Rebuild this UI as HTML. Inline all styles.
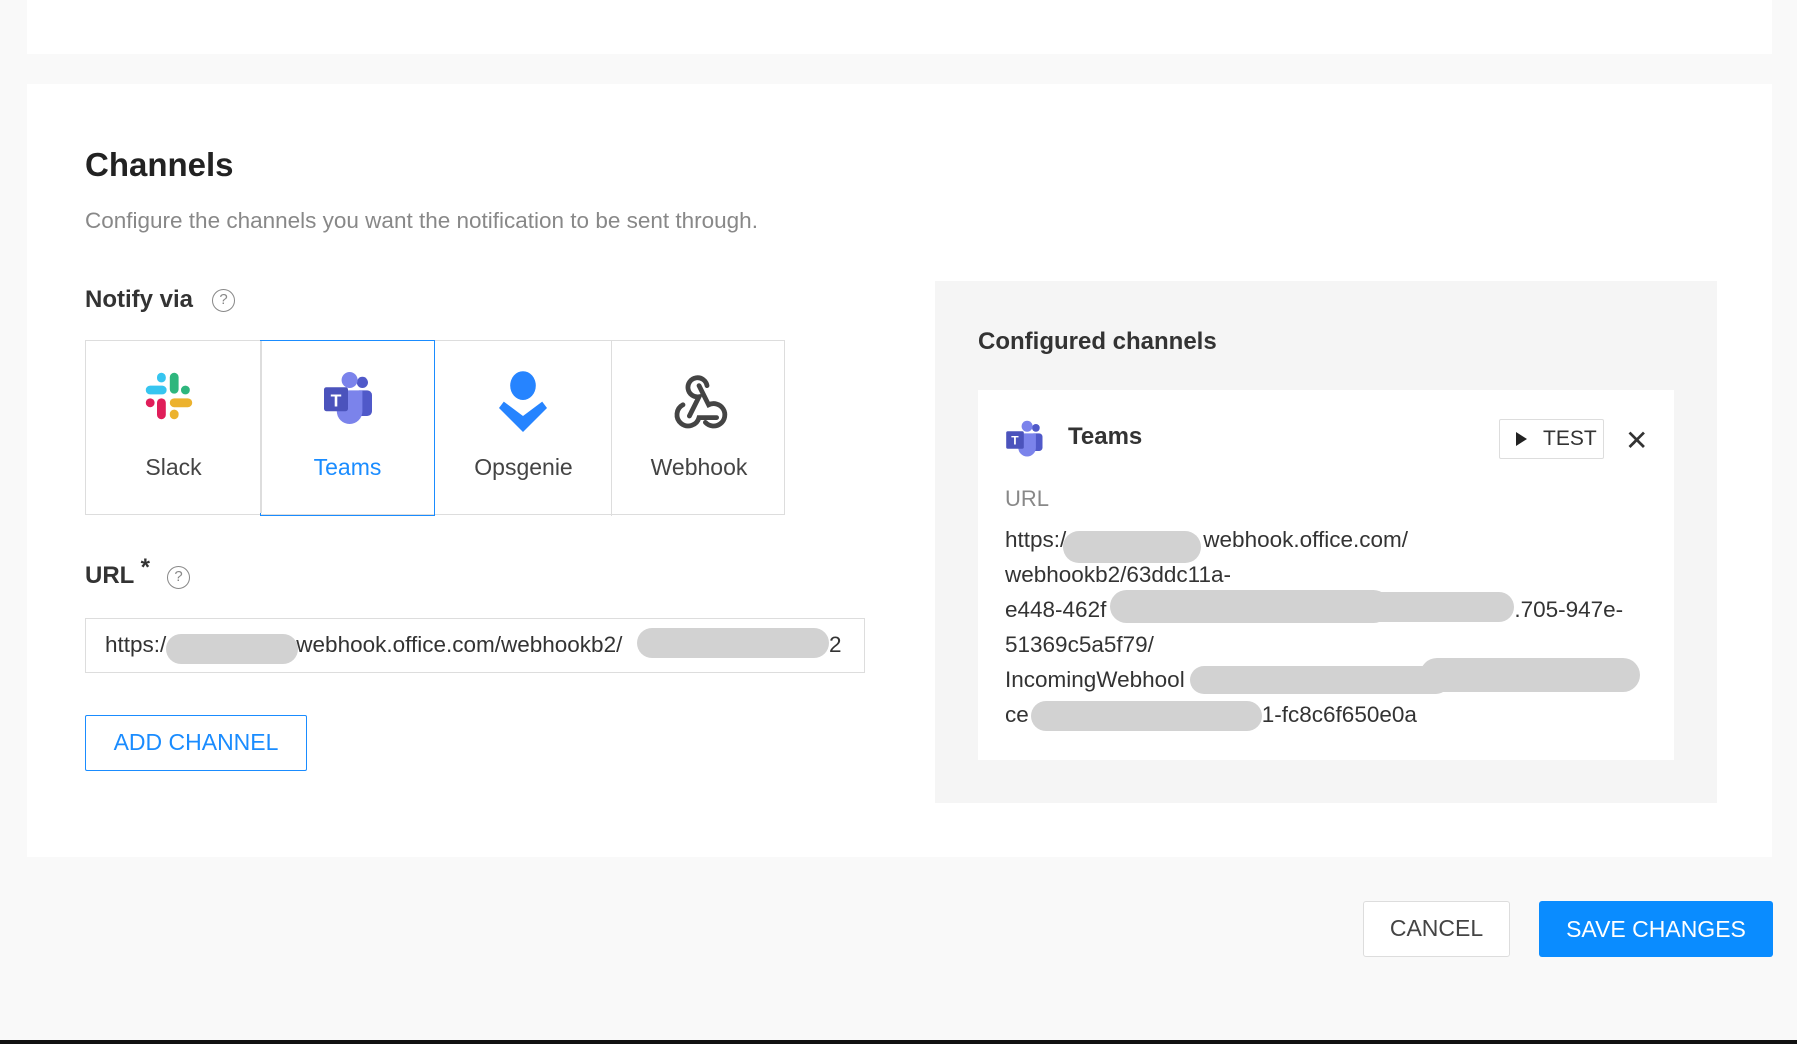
<!DOCTYPE html>
<html><head><meta charset="utf-8"><style>
*{box-sizing:border-box;margin:0;padding:0}
body{width:1797px;height:1044px;background:#f9f9f9;font-family:"Liberation Sans",sans-serif;position:relative;overflow:hidden;color:#333}
.a{position:absolute}
.card{background:#fff}
.tile{position:absolute;top:0;width:175px;height:175px;text-align:center}
.tile svg{position:absolute;left:55px;top:27px}
.tile span{position:absolute;left:0;right:0;top:113px;font-size:23px;color:#444}
.blob{position:absolute;background:#d2d2d2;border-radius:20px}
.ln{position:absolute;left:1005px;font-size:22.5px;color:#333;white-space:nowrap}
.help{position:absolute;width:23px;height:23px;border:1.6px solid #888;border-radius:50%;font-size:15px;color:#888;text-align:center;line-height:20px}
</style></head><body>
<div class="a card" style="left:27px;top:0;width:1745px;height:54px"></div>
<div class="a card" style="left:27px;top:84px;width:1745px;height:773px"></div>

<div class="a" style="left:85px;top:146px;font-size:33px;font-weight:bold;color:#222">Channels</div>
<div class="a" style="left:85px;top:208px;font-size:22.5px;color:#888">Configure the channels you want the notification to be sent through.</div>
<div class="a" style="left:85px;top:286px;font-size:24px;font-weight:bold;color:#333">Notify via</div>
<div class="help" style="left:212px;top:289px">?</div>

<div class="a" style="left:85px;top:340px;width:700px;height:175px;border:1.5px solid #ddd">
 <div class="tile" style="left:0">
  <svg width="64" height="64" viewBox="0 0 40 40">
   <rect x="3" y="11" width="13" height="5.5" rx="2.7" fill="#36c5f0"/><rect x="10" y="3" width="5.5" height="6" rx="2.7" fill="#36c5f0"/>
   <rect x="18" y="3" width="5.5" height="13" rx="2.7" fill="#2eb67d"/><rect x="25" y="11" width="5.5" height="5.5" rx="2.7" fill="#2eb67d"/>
   <rect x="18" y="19" width="14" height="5.5" rx="2.7" fill="#ecb22e"/><rect x="18" y="26" width="5.5" height="6" rx="2.7" fill="#ecb22e"/>
   <rect x="10" y="19" width="5.5" height="13" rx="2.7" fill="#e01e5a"/><rect x="3" y="19" width="5.5" height="5.5" rx="2.7" fill="#e01e5a"/>
  </svg><span>Slack</span></div>
 <div class="tile" style="left:174px;border:1.5px solid #1a8cff;top:-1.5px;height:176px"><svg width="64" height="64" viewBox="0 0 40 40">
   <circle cx="29" cy="9" r="3.5" fill="#5059c9"/><rect x="24" y="14" width="11" height="16" rx="3" fill="#5059c9"/>
   <circle cx="21" cy="7.5" r="5" fill="#7b83eb"/><path d="M13 14h16v13a8 8 0 0 1-16 0z" fill="#7b83eb"/>
   <rect x="5" y="12" width="15" height="15" rx="1.5" fill="#4b53bc"/><text x="12.5" y="24" font-size="11" font-weight="bold" fill="#fff" text-anchor="middle" font-family="Liberation Sans">T</text>
  </svg><span style="color:#1a8cff">Teams</span></div>
 <div class="tile" style="left:350px"><svg width="64" height="64" viewBox="0 0 40 40">
   <ellipse cx="20" cy="11" rx="8" ry="9" fill="#2684ff"/>
   <path d="M8 21 L20 30 L32 21 L35 25 L20 40 L5 25z" fill="#2684ff"/>
  </svg><span>Opsgenie</span></div>
 <div class="tile" style="left:525px;border-left:1.5px solid #ddd"><svg width="64" height="64" viewBox="0 0 40 40" fill="none" stroke="#444" stroke-width="3" stroke-linecap="round">
   <path d="M14 30 L20 18 A6 6 0 1 1 25 11"/><path d="M10 23 A7 7 0 1 0 20 31 L31 31"/><path d="M20 11 L26 23 A7 7 0 1 1 24 34"/>
  </svg><span>Webhook</span></div>
 <div class="a" style="left:174px;top:0;width:1.5px;height:172px;background:#ddd"></div>
</div>

<div class="a" style="left:85px;top:562px;font-size:24px;font-weight:bold;color:#333">URL <span style="position:relative;top:-8px">*</span></div>
<div class="help" style="left:167px;top:566px">?</div>
<div class="a" style="left:85px;top:618px;width:780px;height:55px;border:1.5px solid #ddd;background:#fff"></div>
<div class="a" style="left:105px;top:632px;font-size:22.5px;color:#333;white-space:nowrap">https:/<span style="display:inline-block;width:130px"></span>webhook.office.com/webhookb2/</div>
<div class="a" style="left:829px;top:632px;font-size:22.5px;color:#333">2</div>
<div class="blob" style="left:166px;top:634px;width:132px;height:30px"></div>
<div class="blob" style="left:637px;top:628px;width:192px;height:30px"></div>
<div class="a" style="left:85px;top:715px;width:222px;height:56px;border:1.5px solid #1a8cff;border-radius:2px;color:#1a8cff;font-size:23px;text-align:center;line-height:53px">ADD CHANNEL</div>

<div class="a" style="left:935px;top:281px;width:782px;height:522px;background:#f5f5f5"></div>
<div class="a" style="left:978px;top:328px;font-size:24px;font-weight:bold;color:#333">Configured channels</div>
<div class="a card" style="left:978px;top:390px;width:696px;height:370px"></div>
<svg class="a" style="left:1004px;top:418px" width="44" height="44" viewBox="0 0 40 40">
 <circle cx="29" cy="9" r="3.5" fill="#5059c9"/><rect x="24" y="14" width="11" height="16" rx="3" fill="#5059c9"/>
 <circle cx="21" cy="7.5" r="5" fill="#7b83eb"/><path d="M13 14h16v13a8 8 0 0 1-16 0z" fill="#7b83eb"/>
 <rect x="2" y="12" width="16" height="16" rx="1.5" fill="#4b53bc"/><text x="10" y="24" font-size="11" font-weight="bold" fill="#fff" text-anchor="middle" font-family="Liberation Sans">T</text>
</svg>
<div class="a" style="left:1068px;top:423px;font-size:24px;font-weight:bold;color:#333">Teams</div>
<div class="a" style="left:1499px;top:419px;width:105px;height:40px;border:1.5px solid #ddd;border-radius:2px;font-size:21px;color:#333;line-height:37px;padding-left:43px">TEST</div>
<div class="a" style="left:1516px;top:432px;width:0;height:0;border-left:11px solid #222;border-top:7px solid transparent;border-bottom:7px solid transparent"></div>
<div class="a" style="left:1625px;top:424px;font-size:28px;color:#333">✕</div>
<div class="a" style="left:1005px;top:486px;font-size:22px;color:#888">URL</div>
<div class="ln" style="top:527px">https:/<span style="display:inline-block;width:137px"></span>webhook.office.com/</div>
<div class="ln" style="top:562px">webhookb2/63ddc11a-</div>
<div class="ln" style="top:597px">e448-462f<span style="display:inline-block;width:408px"></span>.705-947e-</div>
<div class="ln" style="top:632px">51369c5a5f79/</div>
<div class="ln" style="top:667px">IncomingWebhool</div>
<div class="ln" style="top:702px">ce<span style="display:inline-block;width:233px"></span>1-fc8c6f650e0a</div>
<div class="blob" style="left:1063px;top:531px;width:138px;height:32px"></div>
<div class="blob" style="left:1110px;top:590px;width:280px;height:33px"></div>
<div class="blob" style="left:1320px;top:592px;width:194px;height:30px"></div>
<div class="blob" style="left:1190px;top:666px;width:260px;height:28px"></div>
<div class="blob" style="left:1420px;top:658px;width:220px;height:34px"></div>
<div class="blob" style="left:1031px;top:701px;width:231px;height:30px"></div>

<div class="a" style="left:1363px;top:901px;width:147px;height:56px;border:1.5px solid #ddd;border-radius:3px;background:#fff;font-size:23px;color:#444;text-align:center;line-height:53px">CANCEL</div>
<div class="a" style="left:1539px;top:901px;width:234px;height:56px;border-radius:3px;background:#0a8cff;font-size:23px;color:#fff;text-align:center;line-height:56px">SAVE CHANGES</div>
<div class="a" style="left:0;top:1040px;width:1797px;height:4px;background:#111"></div>
</body></html>
